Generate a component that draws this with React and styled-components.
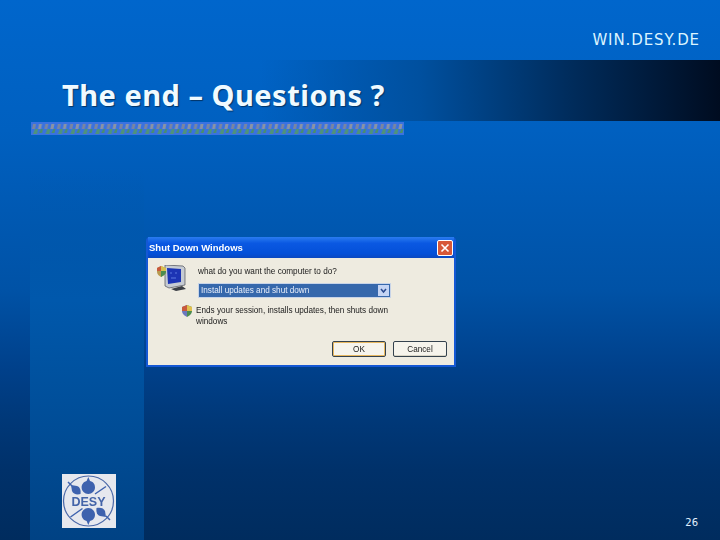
import React from 'react';
import styled, { createGlobalStyle } from 'styled-components';

const Global = createGlobalStyle`
  html, body { margin: 0; padding: 0; background: #002c5e; }
  #root { width: 720px; height: 540px; overflow: hidden; }
`;

const Slide = styled.div`
  position: relative;
  width: 720px;
  height: 540px;
  overflow: hidden;
  display: flex;
  flex-direction: column;
  font-family: "DejaVu Sans", sans-serif;
  color: #fff;
  background:
    linear-gradient(180deg, rgba(0,94,186,0) 170px, #0058ac 300px, #0052a0 370px, #004284 540px) 30px 0 / 114px 100% no-repeat,
    linear-gradient(180deg, #0066cc 0, #0060c0 130px, #0052a6 290px, #00408a 370px, #003878 420px, #00316a 470px, #002c5e 540px);
`;

const TopBar = styled.header`
  height: 60px;
  box-sizing: border-box;
  flex: none;
  display: flex;
  align-items: flex-end;
  justify-content: flex-end;
  padding: 0 20px 11px 0;
  font-size: 15px;
  letter-spacing: 0.9px;
  color: #dcf4ff;
`;

const TitleBand = styled.div`
  height: 61px;
  box-sizing: border-box;
  flex: none;
  display: flex;
  align-items: center;
  padding: 7px 0 0 62px;
  background: linear-gradient(90deg, rgba(0,96,192,0) 260px, #00509f 420px, #002c5c 570px, #000c20 720px);
`;

const Title = styled.h1`
  margin: 0;
  font-family: "Noto Sans", sans-serif;
  font-weight: 700;
  font-size: 29px;
  letter-spacing: 0.5px;
  color: #f0faff;
  text-shadow: 1px 1px 1px #003468;
`;

const Divider = styled.svg`
  display: block;
  flex: none;
  margin: 1px 0 0 31px;
  filter: blur(0.5px);
`;

const Body = styled.main`
  flex: 1;
  padding: 102px 0 0 146px;
`;

const Dialog = styled.section`
  width: 310px;
  height: 130px;
  box-sizing: border-box;
  display: flex;
  flex-direction: column;
  background: #1458d4;
  border-radius: 4px 4px 0 0;
  padding: 0 2px 2px;
  font-family: "Liberation Sans", sans-serif;
  filter: blur(0.5px);
`;

const TitleBar = styled.div`
  height: 21px;
  flex: none;
  display: flex;
  align-items: center;
  justify-content: space-between;
  padding: 0 1px;
  background: linear-gradient(180deg, #2a7cf0 0, #0a58e2 30%, #0450d8 80%, #0a48c0 100%);
`;

const DialogTitle = styled.span`
  font-size: 9.5px;
  font-weight: 700;
  color: #fff;
`;

const Close = styled.span`
  width: 16px;
  height: 16px;
  border: 1px solid #fff;
  border-radius: 2px;
  box-sizing: border-box;
  background: #d85838;
  display: flex;
  align-items: center;
  justify-content: center;
`;

const DialogBody = styled.div`
  flex: 1;
  background: #eeebe0;
  color: #1a1a1a;
  display: flex;
  flex-direction: column;
  font-size: 8.2px;
`;

const PromptRow = styled.div`
  display: flex;
  padding: 7px 0 0 9px;
  gap: 11px;
`;

const Prompt = styled.div`
  display: flex;
  flex-direction: column;
  gap: 7px;
  padding-top: 2px;
`;

const Select = styled.div`
  width: 193px;
  height: 15px;
  box-sizing: border-box;
  display: flex;
  align-items: center;
  justify-content: space-between;
  background: #3668ac;
  border: 1px solid #c8d4e8;
  color: #e8eefa;
  padding: 0 1px 0 2px;
`;

const Arrow = styled.span`
  width: 11px;
  height: 11px;
  background: #c4d4f4;
  display: flex;
  align-items: center;
  justify-content: center;
`;

const Hint = styled.div`
  display: flex;
  gap: 3px;
  padding: 7px 0 0 33px;
  line-height: 11px;
  width: 222px;
`;

const Buttons = styled.div`
  margin-top: auto;
  display: flex;
  justify-content: flex-end;
  gap: 7px;
  padding: 0 7px 8px 0;
`;

const Button = styled.span`
  width: 54px;
  height: 16px;
  box-sizing: border-box;
  border: 1px solid #34424e;
  border-radius: 2px;
  background: #f6f4ec;
  display: flex;
  align-items: center;
  justify-content: center;
  box-shadow: ${p => (p.$primary ? 'inset 0 0 0 1px #e8b860' : 'inset 0 -1px 0 #d8d4c4')};
`;

const PageNumber = styled.div`
  position: absolute;
  right: 22px;
  bottom: 12px;
  font-size: 10px;
  color: #e0f0ff;
`;

const Logo = styled.svg`
  position: absolute;
  left: 62px;
  top: 474px;
  filter: blur(0.3px);
`;

const Shield = ({ size = 12 }) => (
  <svg width={size} height={size} viewBox="0 0 12 12" style={{ flex: 'none' }}>
    <path d="M6 0 L11 2 V6 C11 9 8 11 6 12 Z" fill="#4c8c50" />
    <path d="M6 0 L1 2 V6 C1 9 4 11 6 12 Z" fill="#6a78c0" />
    <path d="M1 2 L6 0 V6 H1 Z" fill="#c85a3c" />
    <path d="M11 2 L6 0 V6 H11 Z" fill="#e0c050" />
  </svg>
);

const Computer = () => (
  <svg width="30" height="26" viewBox="0 0 30 26" style={{ flex: 'none' }}>
    <path d="M14 24 L25 21 L29 24 L19 26 Z" fill="#3a3e44" />
    <path d="M8 0 L26 1 L28 3 V20 L12 23 L8 21 Z" fill="#c6cbd2" stroke="#4a4e58" strokeWidth="0.7" />
    <path d="M10 3 L24 4 V17 L11 19 Z" fill="#1c34b4" />
    <path d="M13 8 h2 M18 8 h2 M14 13 h5" stroke="#5a78e0" strokeWidth="1" />
    <path d="M4 1 L9 3 V7 C9 9 6 11 4 12 C2 11 0 9 0 7 V3 Z" fill="#b89a50" />
    <path d="M0 3 L4 1 V6 H0 Z" fill="#c85a3c" />
    <path d="M9 3 L4 1 V6 H9 Z" fill="#d8c050" />
    <path d="M4 6 H9 V7 C9 9 6 11 4 12 Z" fill="#4c8c50" />
  </svg>
);

export default function App() {
  return (
    <Slide>
      <Global />
      <TopBar>WIN.DESY.DE</TopBar>
      <TitleBand><Title>The end – Questions ?</Title></TitleBand>
      <Divider width="373" height="13" viewBox="0 0 373 13">
        <defs>
          <pattern id="band" width="12.43" height="13" patternUnits="userSpaceOnUse">
            <rect width="12.43" height="13" fill="#3a72e0" />
            <path d="M2 2 H5 L4 7 H1 Z" fill="#7a86a0" />
            <path d="M4 7 H7 L6 12 H2 Z" fill="#4f9478" />
            <path d="M8 2 H11 L10 7 H7 Z" fill="#8a94a4" />
            <path d="M10 7 H12 L11 11 H8 Z" fill="#4a9068" />
          </pattern>
        </defs>
        <rect width="373" height="13" fill="url(#band)" />
      </Divider>
      <Body>
        <Dialog>
          <TitleBar>
            <DialogTitle>Shut Down Windows</DialogTitle>
            <Close>
              <svg width="10" height="10" viewBox="0 0 10 10"><path d="M1.5 1.5 L8.5 8.5 M8.5 1.5 L1.5 8.5" stroke="#fff" strokeWidth="1.6" /></svg>
            </Close>
          </TitleBar>
          <DialogBody>
            <PromptRow>
              <Computer />
              <Prompt>
                <span>what do you want the computer to do?</span>
                <Select>
                  <span>Install updates and shut down</span>
                  <Arrow>
                    <svg width="7" height="6" viewBox="0 0 7 6"><path d="M1 1 L3.5 4 L6 1" fill="none" stroke="#2a4a90" strokeWidth="1.5" /></svg>
                  </Arrow>
                </Select>
              </Prompt>
            </PromptRow>
            <Hint>
              <Shield />
              <span>Ends your session, installs updates, then shuts down windows</span>
            </Hint>
            <Buttons>
              <Button $primary>OK</Button>
              <Button>Cancel</Button>
            </Buttons>
          </DialogBody>
        </Dialog>
      </Body>
      <Logo width="54" height="54" viewBox="0 0 54 54">
        <rect width="54" height="54" fill="#e6e8ee" />
        <circle cx="26.5" cy="27" r="25" fill="none" stroke="#4a68a8" strokeWidth="1.2" />
        <path d="M26.3 3 L28 7 C32 8 33 11 33 13.5 C33 17 30 20 26.3 20 C22.6 20 19.6 17 19.6 13.5 C19.6 11 21 8 24.6 7 Z" fill="#3e62ae" />
        <path d="M26.3 51 L28 47 C32 46 33 43 33 40.5 C33 37 30 34 26.3 34 C22.6 34 19.6 37 19.6 40.5 C19.6 43 21 46 24.6 47 Z" fill="#3e62ae" />
        <path d="M9 11 L15 12 C18 13 19 16 18.5 20 C15 21 11 20 10 17 Z" fill="#3e62ae" />
        <path d="M44 43 L38 42 C35 41 34 38 34.5 34 C38 33 42 34 43 37 Z" fill="#3e62ae" />
        <path d="M33 20 L44 12.5 M20.5 34.5 L8.5 43 M6 8 L10 12 M44 42 L48 46" stroke="#3e62ae" strokeWidth="1.5" />
        <text x="26.5" y="32" textAnchor="middle" fontFamily="Liberation Sans, sans-serif" fontWeight="700" fontSize="12.5" fill="#4464a8">DESY</text>
      </Logo>
      <PageNumber>26</PageNumber>
    </Slide>
  );
}
